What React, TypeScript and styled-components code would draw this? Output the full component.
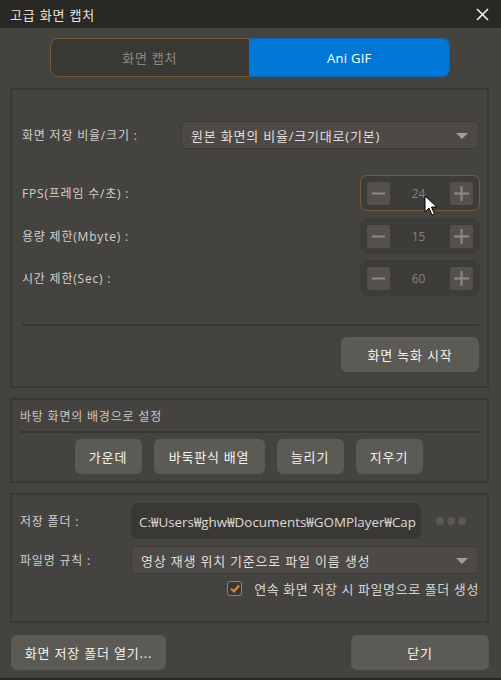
import React from "react";
import styled, { createGlobalStyle, css } from "styled-components";

const Global = createGlobalStyle`
  html, body { margin: 0; padding: 0; background: #454340; }
  body { font-family: "Open Sans", "Noto Sans CJK KR", sans-serif; }
  * { box-sizing: border-box; }
`;

const Window = styled.div`
  position: relative;
  width: 501px;
  height: 680px;
  background: #454340;
  border-bottom: 2px solid #2a2825;
  display: flex;
  flex-direction: column;
  color: #d6d3ce;
  font-size: 12px;
  letter-spacing: 0.8px;
  overflow: hidden;
`;

const TitleBar = styled.div`
  height: 28px;
  flex: none;
  background: #2a2825;
  display: flex;
  align-items: center;
  justify-content: space-between;
  padding: 0 12px 0 10px;
  color: #e6e3de;
  font-size: 13px;
`;

const Body = styled.div`
  display: flex;
  flex-direction: column;
  padding: 10px 12px 0 10px;
`;

const Tabs = styled.div`
  display: flex;
  width: 400px;
  height: 39px;
  margin: 0 auto;
`;

const Tab = styled.div<{ $active?: boolean }>`
  flex: 1;
  display: flex;
  align-items: center;
  justify-content: center;
  font-size: 13px;
  ${(p) =>
    p.$active
      ? css`
          background: #0078d7;
          color: #ffffff;
          border: 1px solid #0a66b4;
          border-left: none;
          border-radius: 0 8px 8px 0;
          letter-spacing: 0.3px;
        `
      : css`
          background: #3a3835;
          color: #8e8a84;
          border: 1px solid #7a5a34;
          border-radius: 8px 0 0 8px;
        `}
`;

const Panel = styled.div<{ $mt: number; $h: number; $pl?: number }>`
  margin-top: ${(p) => p.$mt}px;
  height: ${(p) => p.$h}px;
  border: 2px solid #3a3835;
  padding: 0 8px 0 ${(p) => p.$pl ?? 8}px;
  display: flex;
  flex-direction: column;
`;

const Row = styled.div<{ $mt: number; $h: number }>`
  margin-top: ${(p) => p.$mt}px;
  height: ${(p) => p.$h}px;
  display: flex;
  align-items: center;
  justify-content: space-between;
`;

const Label = styled.span`
  color: #d2cfca;
  font-size: 12px;
  white-space: nowrap;
`;

const Select = styled.div<{ $w: number }>`
  width: ${(p) => p.$w}px;
  height: 28px;
  background: #4c4946;
  border: 1px solid #3c3a37;
  border-radius: 5px;
  display: flex;
  align-items: center;
  justify-content: space-between;
  padding: 0 10px 0 9px;
  color: #e2dfda;
  font-size: 13px;
`;

const Arrow = styled.span`
  width: 0;
  height: 0;
  border-left: 6px solid transparent;
  border-right: 6px solid transparent;
  border-top: 6px solid #a19d98;
  margin-top: 1px;
`;

const Stepper = styled.div<{ $focus?: boolean }>`
  width: 120px;
  height: 36px;
  background: #3e3c39;
  border: 1px solid ${(p) => (p.$focus ? "#7a5a34" : "#3e3c39")};
  border-radius: 7px;
  display: flex;
  align-items: center;
  justify-content: space-between;
  padding: 0 6px;
  margin-right: -1px;
`;

const StepBtn = styled.div`
  width: 23px;
  height: 23px;
  border-radius: 3px;
  background: #54514d;
  display: flex;
  align-items: center;
  justify-content: center;
`;

const StepValue = styled.span`
  color: #86827c;
  font-size: 12px;
  letter-spacing: 0;
  margin-right: 3px;
`;

const Separator = styled.div<{ $mt: number; $inset: number }>`
  margin: ${(p) => p.$mt}px ${(p) => p.$inset}px 0 ${(p) => p.$inset}px;
  height: 2px;
  background: #383633;
  flex: none;
`;

const Button = styled.div<{ $w: number }>`
  width: ${(p) => p.$w}px;
  height: 35px;
  background: #5c5a55;
  border-radius: 6px;
  display: flex;
  align-items: center;
  justify-content: center;
  color: #f4f2ee;
  font-size: 13px;
  white-space: nowrap;
`;

const RightAlign = styled.div<{ $mt: number }>`
  margin-top: ${(p) => p.$mt}px;
  display: flex;
  justify-content: flex-end;
`;

const PanelTitle = styled.div`
  margin-top: 6px;
  height: 20px;
  display: flex;
  align-items: center;
  color: #c9c6c1;
  font-size: 12px;
`;

const ButtonGroup = styled.div`
  margin-top: 6px;
  display: flex;
  justify-content: center;
  gap: 12px;
  padding-right: 2px;
`;

const PathBox = styled.div`
  width: 290px;
  height: 36px;
  background: #3a3835;
  border-radius: 7px;
  display: flex;
  align-items: center;
  padding: 0 6px 0 8px;
  overflow: hidden;
  white-space: nowrap;
  color: #dedbd6;
  font-size: 13.4px;
  letter-spacing: 0;
`;

const Dots = styled.div`
  width: 58px;
  display: flex;
  gap: 3px;
  justify-content: center;
  padding-left: 2px;
`;

const Dot = styled.span`
  width: 8px;
  height: 8px;
  border-radius: 50%;
  background: #5b5854;
`;

const FieldRight = styled.div`
  display: flex;
  align-items: center;
  margin-left: auto;
`;

const CheckRow = styled.div`
  margin-top: 7px;
  height: 14px;
  display: flex;
  align-items: center;
  justify-content: flex-end;
  gap: 12px;
  color: #d8d5d0;
  font-size: 13px;
  letter-spacing: 0.6px;
`;

const CheckBox = styled.span`
  width: 15px;
  height: 15px;
  border: 1px solid #8a8680;
  border-radius: 3px;
  background: #3a3835;
  display: flex;
  align-items: center;
  justify-content: center;
`;

const Footer = styled.div`
  margin-top: 12px;
  display: flex;
  justify-content: space-between;
  padding-left: 1px;
`;

const Cursor = styled.svg`
  position: absolute;
  left: 424px;
  top: 195px;
`;

const Minus = () => (
  <svg width="13" height="13" viewBox="0 0 13 13">
    <path d="M0 6.5H13" stroke="#8d8984" strokeWidth="2" />
  </svg>
);
const Plus = () => (
  <svg width="15" height="15" viewBox="0 0 15 15">
    <path d="M0 7.5H15M7.5 0V15" stroke="#8d8984" strokeWidth="2" />
  </svg>
);

const NumberField = ({ value, focus }: { value: number; focus?: boolean }) => (
  <Stepper $focus={focus}>
    <StepBtn>
      <Minus />
    </StepBtn>
    <StepValue>{value}</StepValue>
    <StepBtn>
      <Plus />
    </StepBtn>
  </Stepper>
);

export default function App() {
  return (
    <>
      <Global />
      <Window>
        <TitleBar>
          <span>고급 화면 캡처</span>
          <svg width="13" height="13" viewBox="0 0 13 13">
            <path d="M1 1L12 12M12 1L1 12" stroke="#f2f0ec" strokeWidth="1.6" />
          </svg>
        </TitleBar>
        <Body>
          <Tabs>
            <Tab>화면 캡처</Tab>
            <Tab $active>Ani GIF</Tab>
          </Tabs>

          <Panel $mt={11} $h={300} $pl={10}>
            <Row $mt={31} $h={28}>
              <Label>화면 저장 비율/크기 :</Label>
              <Select $w={298}>
                <span>원본 화면의 비율/크기대로(기본)</span>
                <Arrow />
              </Select>
            </Row>
            <Row $mt={26} $h={36}>
              <Label>FPS(프레임 수/초) :</Label>
              <NumberField value={24} focus />
            </Row>
            <Row $mt={7} $h={36}>
              <Label>용량 제한(Mbyte) :</Label>
              <NumberField value={15} />
            </Row>
            <Row $mt={6} $h={36}>
              <Label>시간 제한(Sec) :</Label>
              <NumberField value={60} />
            </Row>
            <Separator $mt={28} $inset={0} />
            <RightAlign $mt={11}>
              <Button $w={138}>화면 녹화 시작</Button>
            </RightAlign>
          </Panel>

          <Panel $mt={10} $h={85}>
            <PanelTitle>바탕 화면의 배경으로 설정</PanelTitle>
            <Separator $mt={5} $inset={0} />
            <ButtonGroup>
              <Button $w={67}>가운데</Button>
              <Button $w={111}>바둑판식 배열</Button>
              <Button $w={67}>늘리기</Button>
              <Button $w={67}>지우기</Button>
            </ButtonGroup>
          </Panel>

          <Panel $mt={10} $h={130}>
            <Row $mt={8} $h={36}>
              <Label>저장 폴더 :</Label>
              <FieldRight>
                <PathBox>C:₩Users₩ghw₩Documents₩GOMPlayer₩Cap</PathBox>
                <Dots>
                  <Dot />
                  <Dot />
                  <Dot />
                </Dots>
              </FieldRight>
            </Row>
            <Row $mt={7} $h={28}>
              <Label>파일명 규칙 :</Label>
              <Select $w={348}>
                <span>영상 재생 위치 기준으로 파일 이름 생성</span>
                <Arrow />
              </Select>
            </Row>
            <CheckRow>
              <CheckBox>
                <svg width="10" height="9" viewBox="0 0 10 9">
                  <path d="M1 4.5L4 7.5L9 1.5" stroke="#ee8a1c" strokeWidth="2" fill="none" />
                </svg>
              </CheckBox>
              <span>연속 화면 저장 시 파일명으로 폴더 생성</span>
            </CheckRow>
          </Panel>

          <Footer>
            <Button $w={155}>화면 저장 폴더 열기...</Button>
            <Button $w={138}>닫기</Button>
          </Footer>
        </Body>
        <Cursor width="14" height="22" viewBox="0 0 14 22">
          <path
            d="M1 1V17L5 13L8 20L10.5 19L7.5 12H13Z"
            fill="#ffffff"
            stroke="#000000"
            strokeWidth="1"
            strokeLinejoin="miter"
          />
        </Cursor>
      </Window>
    </>
  );
}
